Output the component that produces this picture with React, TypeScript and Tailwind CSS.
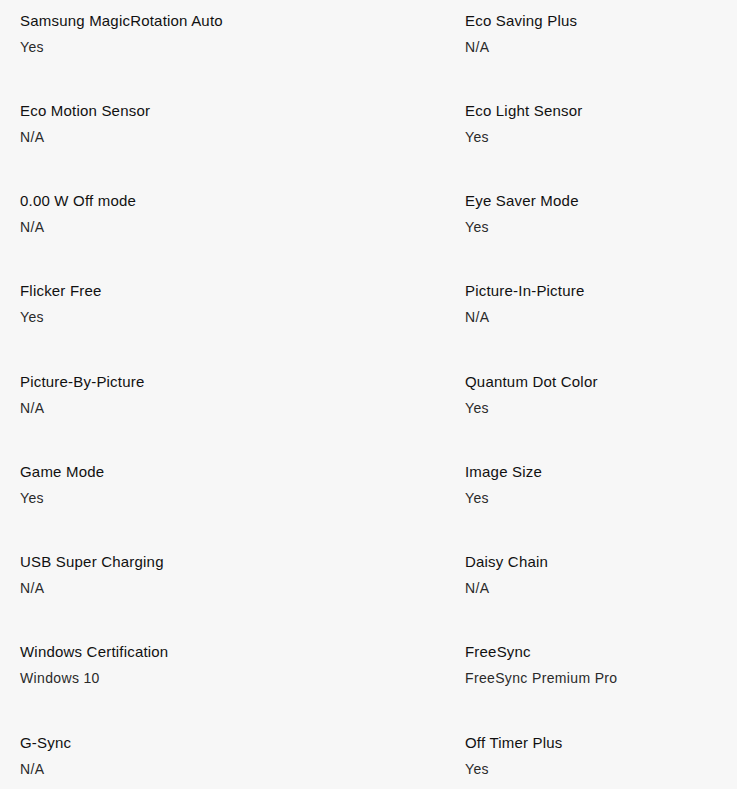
import React from "react";

const items: [string, string][] = [
  ["Samsung MagicRotation Auto", "Yes"],
  ["Eco Saving Plus", "N/A"],
  ["Eco Motion Sensor", "N/A"],
  ["Eco Light Sensor", "Yes"],
  ["0.00 W Off mode", "N/A"],
  ["Eye Saver Mode", "Yes"],
  ["Flicker Free", "Yes"],
  ["Picture-In-Picture", "N/A"],
  ["Picture-By-Picture", "N/A"],
  ["Quantum Dot Color", "Yes"],
  ["Game Mode", "Yes"],
  ["Image Size", "Yes"],
  ["USB Super Charging", "N/A"],
  ["Daisy Chain", "N/A"],
  ["Windows Certification", "Windows 10"],
  ["FreeSync", "FreeSync Premium Pro"],
  ["G-Sync", "N/A"],
  ["Off Timer Plus", "Yes"],
];

export default function App() {
  return (
    <div
      className="min-h-[789px] w-full bg-[#f7f7f7] pl-5 pt-[10.5px]"
      style={{ fontFamily: '"Liberation Sans", Arial, sans-serif' }}
    >
      <div className="grid grid-cols-[445px_1fr]">
        {items.map(([t, v], i) => (
          <div key={i} className="h-[90.25px]">
            <div className="text-[15px] leading-[20px] tracking-[0.2px] text-[#111]">{t}</div>
            <div className="mt-[6px] text-[14px] leading-[20px] tracking-[0.35px] text-[#2a2a2a]">{v}</div>
          </div>
        ))}
      </div>
    </div>
  );
}
